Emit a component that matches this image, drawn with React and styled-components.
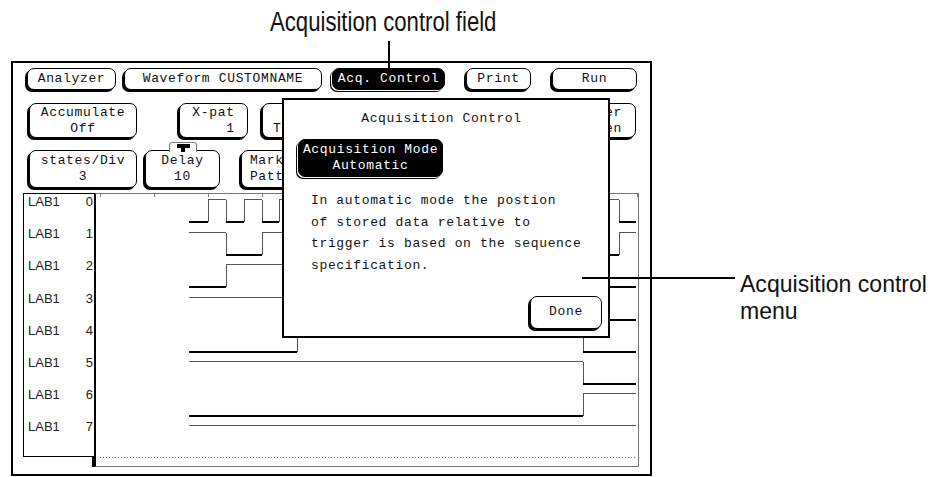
import styled, { createGlobalStyle } from "styled-components"

const GlobalStyle = createGlobalStyle`
  html, body {
    margin: 0;
    padding: 0;
    background: #fff;
  }
  body {
    font-family: "Liberation Mono", "DejaVu Sans Mono", monospace;
  }
`

const NOTE_FONT = `"Liberation Sans", Arial, sans-serif`
const HP_FONT = `"Liberation Mono", "DejaVu Sans Mono", monospace`

// Page + callouts
const Page = styled.div`
  position: relative;
  width: 932px;
  height: 477px;
  overflow: hidden;
  background: #fff;
`

// condensed look of the manual's callout font
const Narrow = styled.span`
  display: inline-block;
  transform: scaleX(${p => p.$k});
  transform-origin: left top;
`

const Caption = styled.div`
  height: 61px;
  box-sizing: border-box;
  padding: 7px 0 0 270px;
  font-family: ${NOTE_FONT};
  font-size: 27px;
  line-height: 30px;
  color: #111;
  white-space: nowrap;
`

const Body = styled.div`
  display: flex;
  align-items: flex-start;
`

const SideNote = styled.div`
  flex: none;
  margin: 209px 0 0 88px;
  font-family: ${NOTE_FONT};
  font-size: 24px;
  line-height: 27px;
  color: #111;
  white-space: nowrap;
`

const FieldLeader = styled.div`
  position: absolute;
  left: 388px;
  top: 41px;
  width: 2px;
  height: 27px;
  background: #000;
`

const MenuLeader = styled.div`
  position: absolute;
  left: 582px;
  top: 277px;
  width: 153px;
  height: 2px;
  background: #000;
`

// Analyzer screen
const Screen = styled.div`
  position: relative;
  flex: none;
  box-sizing: border-box;
  margin-left: 11px;
  width: 641px;
  height: 415px;
  border: 2px solid #000;
  display: flex;
  flex-direction: column;
`

const KeyRow = styled.div`
  display: flex;
  flex: none;
  height: ${p => p.$h}px;
  margin-top: ${p => p.$mt}px;
  padding-left: ${p => p.$pl}px;
`

const Key = styled.div`
  position: relative;
  box-sizing: border-box;
  flex: none;
  width: ${p => p.$w}px;
  height: 100%;
  margin-left: ${p => p.$ml || 0}px;
  border: 1px solid #000;
  border-radius: 7px;
  background: ${p => (p.$on ? "#000" : "#fff")};
  color: ${p => (p.$on ? "#fff" : "#111")};
  box-shadow: ${p =>
    p.$on ? "-1px 1px 0 #fff, -2px 2px 0 #000" : "-2px 2px 0 #000"};
  display: flex;
  flex-direction: column;
  align-items: center;
  justify-content: center;
  text-align: center;
  font-family: ${HP_FONT};
  font-size: 13px;
  letter-spacing: 0.65px;
  line-height: 16px;
  white-space: pre;
`

const ModeKey = styled(Key)`
  height: 38px;
  margin-top: 12px;
`

const DoneKey = styled(Key)`
  height: 33px;
  margin-top: 19px;
  align-self: flex-end;
`

const TriggerTab = styled.svg`
  position: absolute;
  left: 23px;
  top: -9px;
  width: 28px;
  height: 11px;
  overflow: visible;
`

// Waveform area
const Traces = styled.div`
  display: flex;
  align-items: flex-start;
  margin-top: 5px;
  padding-left: 10px;
`

const Labels = styled.div`
  box-sizing: border-box;
  width: 71px;
  height: 264px;
  border: 1px solid #000;
  border-right: none;
`

const LabelRow = styled.div`
  display: flex;
  justify-content: space-between;
  height: 32.2px;
  padding: 0 1px 0 4px;
  font-family: "Liberation Sans", Arial, sans-serif;
  font-size: 13px;
  line-height: 16px;
  color: #222;
`

const WavePanel = styled.div`
  position: relative;
  box-sizing: border-box;
  width: 545px;
  height: 274px;
  border: 1px solid #777;
  border-left: 2px solid #000;

  &::after {
    content: "";
    position: absolute;
    left: -4px;
    bottom: -1px;
    width: 3px;
    height: 10px;
    background: #000;
  }
`

const WaveSvg = styled.svg`
  display: block;
`

// Acquisition control pop-up
const Dialog = styled.div`
  position: absolute;
  left: 269px;
  top: 35px;
  box-sizing: border-box;
  width: 328px;
  height: 240px;
  border: 2px solid #000;
  background: #fff;
  display: flex;
  flex-direction: column;
  padding: 11px 6px 0 12px;
  font-family: ${HP_FONT};
  font-size: 13px;
  letter-spacing: 0.65px;
  color: #111;
`

const DialogTitle = styled.div`
  line-height: 16px;
  text-align: center;
  padding-right: 15px;
`

const Explain = styled.div`
  margin: 13px 0 0 15px;
  line-height: 21.67px;
  white-space: pre;
`

const HI = [199, 232, 264, 297, 329, 361, 393, 425]
const DROP = 23
const X0 = 189
const X1 = 636

const steps = (from, step, n) => Array.from({ length: n }, (_, k) => Math.round(from + k * step))

const SIGNALS = [
  { high: false, edges: steps(208, 17.87, 24) },
  { high: true, edges: steps(226, 35.75, 12) },
  { high: false, edges: [226, 430] },
  { high: true, edges: [520] },
  { high: false, edges: [297, 583] },
  { high: true, edges: [583] },
  { high: false, edges: [583] },
  { high: true, edges: [] },
]

function Waveforms() {
  const thin = []
  const thick = []
  SIGNALS.forEach((s, i) => {
    const hy = HI[i] + 0.5
    const ly = HI[i] + DROP
    let high = s.high
    let x = X0
    const points = [...s.edges, X1]
    points.forEach((e, k) => {
      if (high) thin.push(`M${x} ${hy}H${e}`)
      else thick.push(`M${x} ${ly}H${e}`)
      if (k < s.edges.length) {
        thin.push(`M${e + 0.5} ${hy}V${ly}`)
        high = !high
      }
      x = e
    })
  })
  const ticks = steps(100, 54, 10).concat([637])
  return (
    <WaveSvg width="542" height="272" viewBox="96 194 542 272" shapeRendering="crispEdges">
      {ticks.map(t => (
        <line key={t} x1={t + 0.5} y1="194" x2={t + 0.5} y2="197" stroke="#777" strokeWidth="1" />
      ))}
      <path d={thin.join("")} stroke="#555" strokeWidth="1" fill="none" />
      <path d={thick.join("")} stroke="#000" strokeWidth="2" fill="none" />
      <line x1="100" y1="457.5" x2="637" y2="457.5" stroke="#666" strokeWidth="1" strokeDasharray="1 2" />
    </WaveSvg>
  )
}

export default function App() {
  return (
    <Page>
      <GlobalStyle />
      <Caption>
        <Narrow $k={0.82}>Acquisition control field</Narrow>
      </Caption>
      <Body>
        <Screen>
          <KeyRow $h={22} $mt={5} $pl={14}>
            <Key $w={89}>Analyzer</Key>
            <Key $w={198} $ml={8}>Waveform CUSTOMNAME</Key>
            <Key $w={113} $ml={10} $on>Acq. Control</Key>
            <Key $w={65} $ml={21}>Print</Key>
            <Key $w={85} $ml={21}>Run</Key>
          </KeyRow>
          <KeyRow $h={35} $mt={13} $pl={16}>
            <Key $w={108}>{"Accumulate\nOff"}</Key>
            <Key $w={69} $ml={42}>{"X-pat\n    1"}</Key>
            <Key $w={115} $ml={14}>{"Sample\nTime Tagged"}</Key>
            <Key $w={79} $ml={180}>{"Center\nScreen"}</Key>
          </KeyRow>
          <KeyRow $h={38} $mt={12} $pl={16}>
            <Key $w={108}>{"states/Div\n3"}</Key>
            <Key $w={75} $ml={8}>
              <TriggerTab viewBox="0 0 28 11">
                <rect x="1" y="8" width="26" height="3" fill="#fff" />
                <path d="M0.5 10V3Q0.5 0.5 3 0.5H25Q27.5 0.5 27.5 3V10" stroke="#777" fill="none" />
                <rect x="8" y="2" width="13" height="4" fill="#000" />
                <rect x="12" y="6" width="4" height="4" fill="#000" />
              </TriggerTab>
              {"Delay\n10"}
            </Key>
            <Key $w={77} $ml={21}>{"Markers\nPattern"}</Key>
          </KeyRow>
          <Traces>
            <Labels>
              {[0, 1, 2, 3, 4, 5, 6, 7].map(n => (
                <LabelRow key={n}>
                  <span>LAB1</span>
                  <span>{n}</span>
                </LabelRow>
              ))}
            </Labels>
            <WavePanel>
              <Waveforms />
            </WavePanel>
          </Traces>

          <Dialog>
            <DialogTitle>Acquisition Control</DialogTitle>
            <ModeKey $w={145} $ml={2} $on>
              {"Acquisition Mode\nAutomatic"}
            </ModeKey>
            <Explain>
              {"In automatic mode the postion\nof stored data relative to\ntrigger is based on the sequence\nspecification."}
            </Explain>
            <DoneKey $w={72}>Done</DoneKey>
          </Dialog>
        </Screen>
        <SideNote>
          <Narrow $k={0.96}>
            Acquisition control
            <br />
            menu
          </Narrow>
        </SideNote>
      </Body>
      <FieldLeader />
      <MenuLeader />
    </Page>
  )
}
